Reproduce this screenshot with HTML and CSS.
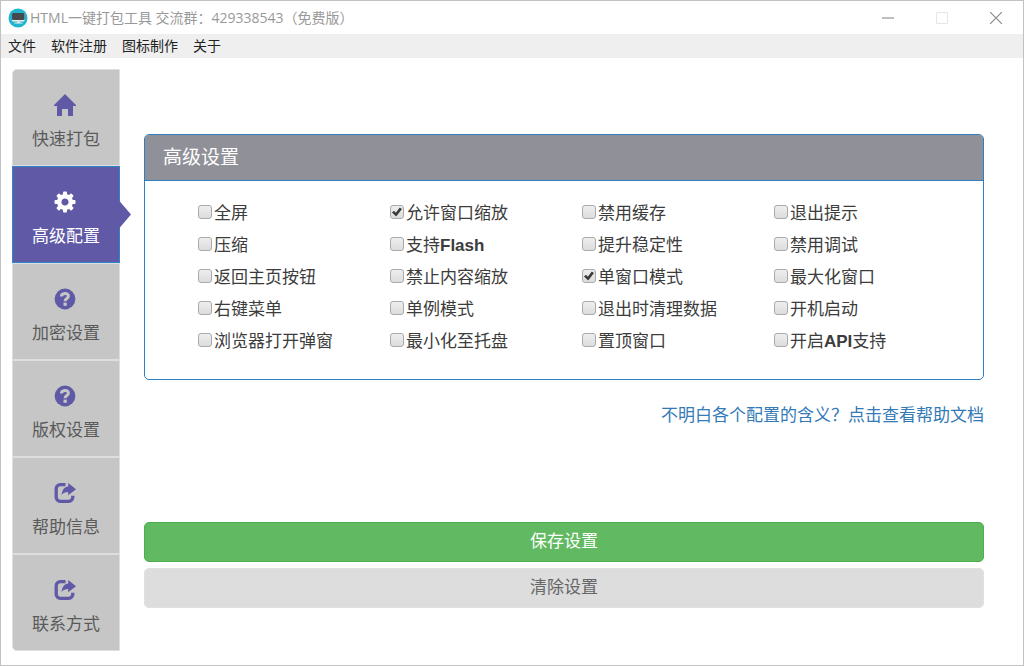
FILE: index.html
```html
<!DOCTYPE html>
<html lang="zh-CN">
<head>
<meta charset="utf-8">
<title>HTML一键打包工具</title>
<link rel="stylesheet" href="styles.css">
</head>
<body>
<svg class="sprite" aria-hidden="true">
  <symbol id="home" viewBox="0 0 22 22"><path d="M11 0 22 11v1h-3v10h-5v-7H8v7H3V12H0v-1z"/></symbol>
  <symbol id="gear" viewBox="-11 -11 22 22">
    <circle r="5.8" fill="none" stroke="currentColor" stroke-width="4.4"/>
    <g id="teeth"><rect x="-2" y="-10.5" width="4" height="4.5" rx="1"/><rect x="-2" y="6" width="4" height="4.5" rx="1"/><rect x="-10.5" y="-2" width="4.5" height="4" rx="1"/><rect x="6" y="-2" width="4.5" height="4" rx="1"/></g>
    <use href="#teeth" transform="rotate(45)"/>
  </symbol>
  <symbol id="question" viewBox="0 0 22 22">
    <circle cx="11" cy="11" r="10.4"/>
    <path d="M7.4 8.6C7.4 4.6 14.4 4.4 14.4 8.1c0 2.6-3.3 2.2-3.3 5.1" fill="none" stroke="#c6c6c6" stroke-width="3"/>
    <path d="M9.5 14.6h3.3v3.2H9.5z" fill="#c6c6c6"/>
  </symbol>
  <symbol id="share" viewBox="0 0 22 22">
    <path d="M11.5 2.7H6.2a4 4 0 0 0-4 4v8.6a4 4 0 0 0 4 4h8.6a4 4 0 0 0 4-4v-1.6" fill="none" stroke="currentColor" stroke-width="3.3"/>
    <path d="M14.2 1 22 7.3l-7.8 6v-3.2c-3 0-5 .8-6.6 3C8 8 10.5 5 14.2 4.500z"/>
  </symbol>
</svg>
<div class="window">
  <header class="titlebar">
    <svg class="app-icon" viewBox="0 0 20 20" aria-hidden="true">
      <circle cx="10" cy="10" r="9.5" fill="#1fb4cf"/>
      <rect x="4" y="5" width="12.500" height="8.500" rx="1" fill="#eee"/>
      <rect x="4" y="5" width="12.500" height="7" rx="1" fill="#45484d"/>
      <path d="M9 13.500h3v1H9zM6.500 14.500h8v1h-8z" fill="#eee"/>
    </svg>
    <h1 class="title">HTML一键打包工具 交流群：429338543（免费版）</h1>
    <div class="controls">
      <button type="button" aria-label="最小化"><svg viewBox="0 0 12 12"><path d="M0 6h12" stroke="#aaa" stroke-width="1.500"/></svg></button>
      <button type="button" aria-label="最大化" disabled><svg viewBox="0 0 12 12"><path d="M.5.5h11v11H.5z" stroke="#e6e6e6"/></svg></button>
      <button type="button" aria-label="关闭"><svg viewBox="0 0 12 12"><path d="M0 0l12 12M12 0 0 12" stroke="#8c8c8c" stroke-width="1.200"/></svg></button>
    </div>
  </header>
  <nav class="menubar">
    <a href="#file">文件</a><a href="#register">软件注册</a><a href="#icon">图标制作</a><a href="#about">关于</a>
  </nav>
  <div class="content">
    <nav class="sidebar">
      <a class="tab" href="#quick"><svg><use href="#home"/></svg>快速打包</a>
      <a class="tab active" href="#advanced" aria-current="page"><svg><use href="#gear"/></svg>高级配置</a>
      <a class="tab" href="#encrypt"><svg><use href="#question"/></svg>加密设置</a>
      <a class="tab" href="#copyright"><svg><use href="#question"/></svg>版权设置</a>
      <a class="tab" href="#help"><svg><use href="#share"/></svg>帮助信息</a>
      <a class="tab" href="#contact"><svg><use href="#share"/></svg>联系方式</a>
    </nav>
    <main class="main">
      <section class="panel">
        <h2 class="panel-title">高级设置</h2>
        <div class="options">
          <label><input type="checkbox">全屏</label>
          <label><input type="checkbox" checked>允许窗口缩放</label>
          <label><input type="checkbox">禁用缓存</label>
          <label><input type="checkbox">退出提示</label>
          <label><input type="checkbox">压缩</label>
          <label><input type="checkbox">支持<b>Flash</b></label>
          <label><input type="checkbox">提升稳定性</label>
          <label><input type="checkbox">禁用调试</label>
          <label><input type="checkbox">返回主页按钮</label>
          <label><input type="checkbox">禁止内容缩放</label>
          <label><input type="checkbox" checked>单窗口模式</label>
          <label><input type="checkbox">最大化窗口</label>
          <label><input type="checkbox">右键菜单</label>
          <label><input type="checkbox">单例模式</label>
          <label><input type="checkbox">退出时清理数据</label>
          <label><input type="checkbox">开机启动</label>
          <label><input type="checkbox">浏览器打开弹窗</label>
          <label><input type="checkbox">最小化至托盘</label>
          <label><input type="checkbox">置顶窗口</label>
          <label><input type="checkbox">开启<b>API</b>支持</label>
        </div>
      </section>
      <a class="doc-link" href="#docs">不明白各个配置的含义？点击查看帮助文档</a>
      <div class="actions">
        <button type="button" class="btn save">保存设置</button>
        <button type="button" class="btn clear">清除设置</button>
      </div>
    </main>
  </div>
</div>
</body>
</html>
```
FILE: styles.css
```css
* { box-sizing: border-box; }
body {
  margin: 0;
  background: #fff;
  color: #333;
  font: 17px/24px "Liberation Sans", "Noto Sans CJK SC", sans-serif;
}
a { color: inherit; text-decoration: none; }
button { font: inherit; cursor: pointer; }
.sprite { position: absolute; width: 0; height: 0; }
.window { min-height: 100vh; border: 1px solid #c2c2c2; }

.titlebar { display: flex; align-items: center; height: 33px; padding-left: 7px; }
.app-icon { width: 20px; height: 20px; }
.title {
  flex: 1;
  margin: 0 0 0 2px;
  color: #999;
  font: 400 14px/24px "Open Sans", "Noto Sans CJK SC", sans-serif;
  white-space: nowrap;
}
.controls { display: flex; }
.controls button {
  display: grid;
  place-items: center;
  width: 54px;
  height: 32px;
  padding: 0;
  border: 0;
  background: none;
}
.controls svg { width: 12px; height: 12px; fill: none; }

.menubar {
  display: flex;
  gap: 15px;
  padding: 0 7px 2px;
  background: #efefef;
  color: #222;
  font: 14px/22px "Noto Sans CJK SC", sans-serif;
}

.content { display: flex; align-items: flex-start; gap: 24px; padding: 11px 39px 14px 11px; }
.sidebar {
  display: grid;
  gap: 2px;
  flex: none;
  width: 108px;
  border: 1px solid #dedede;
  border-radius: 5px 0 0 5px;
  background: #dedede;
}
.tab {
  position: relative;
  display: flex;
  flex-direction: column;
  align-items: center;
  gap: 12px;
  padding: 24px 0 13px;
  background: #c6c6c6;
  color: #5a5a5a;
}
.tab:first-child { border-top-left-radius: 4px; }
.tab:last-child { border-bottom-left-radius: 4px; }
.tab svg { width: 22px; height: 22px; margin-right: 3px; color: #5f59a6; fill: currentColor; }
.tab.active { background: #5f59a6; color: #fff; outline: 1px solid #2f86cb; }
.tab.active svg { color: #fff; }
.tab.active::after {
  content: "";
  position: absolute;
  left: 100%;
  top: 50%;
  width: 12px;
  height: 28px;
  margin-top: -14px;
  background: #5f59a6;
  clip-path: polygon(0 0, 100% 50%, 0 100%);
}

.main { flex: 1; display: flex; flex-direction: column; padding-top: 65px; }
.panel { border: 1px solid #2f7fc1; border-radius: 5px; overflow: hidden; }
.panel-title {
  margin: 0;
  padding: 11px 18px 10px;
  border-bottom: 1px solid #2f7fc1;
  background: #909198;
  color: #fff;
  font-size: 19px;
  font-weight: 400;
}
.options {
  display: grid;
  grid-template-columns: repeat(4, 1fr);
  padding: 17px 17px 21px 53px;
  color: #3c3c3c;
}
.options label { display: flex; align-items: center; line-height: 32px; white-space: nowrap; }
.options input {
  appearance: none;
  flex: none;
  display: grid;
  place-items: center;
  width: 14px;
  height: 14px;
  margin: 0 2px 4px 0;
  border: 1px solid #aaa;
  border-radius: 3px;
  background: linear-gradient(#eee, #dcdcdc);
}
.options input:checked::before {
  content: "";
  width: 10px;
  height: 10px;
  background: #3a3a3a;
  clip-path: polygon(0 55%, 20% 38%, 38% 58%, 78% 4%, 100% 20%, 42% 96%);
}
.doc-link { align-self: flex-end; margin-top: 24px; color: #337ab7; }
.actions { display: grid; gap: 6px; margin-top: 94px; }
.btn { padding: 7px 12px; border: 1px solid; border-radius: 5px; }
.save { border-color: #4cae4c; background: #61ba62; color: #fff; }
.clear { border-color: #e0e0e0; background: #ddd; color: #666; }
```
